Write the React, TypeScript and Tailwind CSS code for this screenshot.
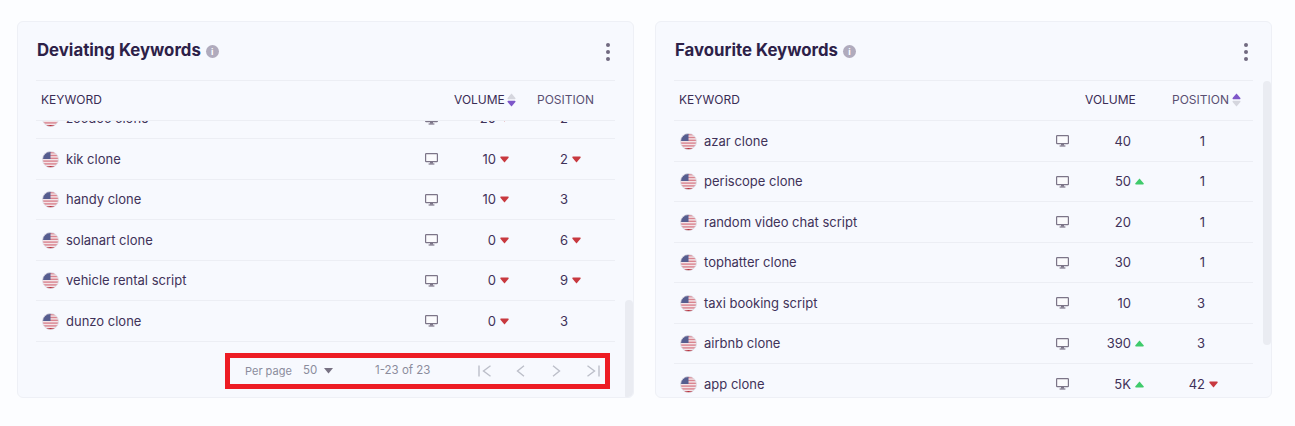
import React from 'react';

type Trend = 'up' | 'down' | null;

interface KeywordRow {
  name: string;
  volume: string;
  volumeTrend: Trend;
  position: string;
  positionTrend: Trend;
}

const deviating: KeywordRow[] = [
  { name: 'zocdoc clone', volume: '20', volumeTrend: 'down', position: '2', positionTrend: null },
  { name: 'kik clone', volume: '10', volumeTrend: 'down', position: '2', positionTrend: 'down' },
  { name: 'handy clone', volume: '10', volumeTrend: 'down', position: '3', positionTrend: null },
  { name: 'solanart clone', volume: '0', volumeTrend: 'down', position: '6', positionTrend: 'down' },
  { name: 'vehicle rental script', volume: '0', volumeTrend: 'down', position: '9', positionTrend: 'down' },
  { name: 'dunzo clone', volume: '0', volumeTrend: 'down', position: '3', positionTrend: null },
];

const favourite: KeywordRow[] = [
  { name: 'azar clone', volume: '40', volumeTrend: null, position: '1', positionTrend: null },
  { name: 'periscope clone', volume: '50', volumeTrend: 'up', position: '1', positionTrend: null },
  { name: 'random video chat script', volume: '20', volumeTrend: null, position: '1', positionTrend: null },
  { name: 'tophatter clone', volume: '30', volumeTrend: null, position: '1', positionTrend: null },
  { name: 'taxi booking script', volume: '10', volumeTrend: null, position: '3', positionTrend: null },
  { name: 'airbnb clone', volume: '390', volumeTrend: 'up', position: '3', positionTrend: null },
  { name: 'app clone', volume: '5K', volumeTrend: 'up', position: '42', positionTrend: 'down' },
];

function FlagIcon() {
  return (
    <svg width="17" height="17" viewBox="0 0 17 17" className="shrink-0">
      <defs>
        <clipPath id="flag-circle">
          <circle cx="8.5" cy="8.5" r="8" />
        </clipPath>
      </defs>
      <g clipPath="url(#flag-circle)">
        <rect width="17" height="17" fill="#f3e4e8" />
        <rect y="1" width="17" height="1.4" fill="#d9848f" />
        <rect y="3.8" width="17" height="1.4" fill="#d9848f" />
        <rect y="6.6" width="17" height="1.4" fill="#d9848f" />
        <rect y="9.4" width="17" height="1.4" fill="#d9848f" />
        <rect y="12.2" width="17" height="1.4" fill="#d9848f" />
        <rect y="15" width="17" height="2" fill="#b9333f" />
        <rect width="8.5" height="8" fill="#565d8f" />
      </g>
      <circle cx="8.5" cy="8.5" r="8" fill="none" stroke="#dcdde6" strokeWidth="0.8" />
    </svg>
  );
}

function DeviceIcon() {
  return (
    <svg width="13" height="12" viewBox="0 0 13 12" className="shrink-0">
      <rect x="0.6" y="0.6" width="11.8" height="8" rx="0.6" fill="#fbfbfd" stroke="#7c7588" strokeWidth="1.2" />
      <rect x="5" y="9" width="3" height="1.6" fill="#7c7588" />
      <rect x="3.6" y="10.4" width="5.8" height="1.2" fill="#7c7588" />
    </svg>
  );
}

function TrendIcon({ trend }: { trend: Trend }) {
  if (!trend) return null;
  if (trend === 'up') {
    return (
      <svg width="9" height="7" viewBox="0 0 9 7" className="shrink-0">
        <path d="M4.5 0.4 L8.6 5.2 Q9 6.4 8 6.4 L1 6.4 Q0 6.4 0.4 5.2 Z" fill="#3fcb6b" />
      </svg>
    );
  }
  return (
    <svg width="9" height="7" viewBox="0 0 9 7" className="shrink-0">
      <path d="M1 0.6 L8 0.6 Q9 0.6 8.6 1.8 L4.5 6.6 L0.4 1.8 Q0 0.6 1 0.6 Z" fill="#c8393f" />
    </svg>
  );
}

function SortIcon({ active }: { active: 'up' | 'down' }) {
  return (
    <svg width="9" height="14" viewBox="0 0 9 14" className="shrink-0">
      <path d="M4.5 0.5 L8.4 5 Q8.8 6.2 7.8 6.2 L1.2 6.2 Q0.2 6.2 0.6 5 Z" fill={active === 'up' ? '#7e57c9' : '#d5d6de'} />
      <path d="M1.2 7.8 L7.8 7.8 Q8.8 7.8 8.4 9 L4.5 13.5 L0.6 9 Q0.2 7.8 1.2 7.8 Z" fill={active === 'down' ? '#7e57c9' : '#d5d6de'} />
    </svg>
  );
}

function Pagination() {
  return (
    <div className="flex justify-end mt-[11px] mr-[5px]">
      <div className="flex items-center w-[385px] h-9 border-[5px] border-[#ed1c24] text-[11.5px] text-[#8b8c9c]">
        <span className="ml-[15px] w-[47px] whitespace-nowrap text-[11px]">Per page</span>
        <span className="ml-[11px] w-[21px]">50</span>
        <svg width="9" height="6" viewBox="0 0 9 6" className="shrink-0">
          <path d="M0 0 H9 L4.5 5.5 Z" fill="#787283" />
        </svg>
        <span className="ml-[42px] w-[55px] whitespace-nowrap">1-23 of 23</span>
        <svg width="14" height="12" viewBox="0 0 14 12" className="ml-[48px] shrink-0" fill="none" stroke="#bcbfc9" strokeWidth="1.4">
          <path d="M1 0.5 V11.5 M12.5 0.8 L5.5 6 L12.5 11.2" />
        </svg>
        <svg width="9" height="12" viewBox="0 0 9 12" className="ml-[24px] shrink-0" fill="none" stroke="#bcbfc9" strokeWidth="1.4">
          <path d="M8 0.8 L1.5 6 L8 11.2" />
        </svg>
        <svg width="9" height="12" viewBox="0 0 9 12" className="ml-[27px] shrink-0" fill="none" stroke="#bcbfc9" strokeWidth="1.4">
          <path d="M1 0.8 L7.5 6 L1 11.2" />
        </svg>
        <svg width="14" height="12" viewBox="0 0 14 12" className="ml-[25px] shrink-0" fill="none" stroke="#bcbfc9" strokeWidth="1.4">
          <path d="M13 0.5 V11.5 M1.5 0.8 L8.5 6 L1.5 11.2" />
        </svg>
      </div>
    </div>
  );
}

interface CardProps {
  title: string;
  rows: KeywordRow[];
  sorted: 'volume' | 'position';
  headKeywordClass: string;
  headVolumeClass: string;
  volumeClass: string;
  positionClass: string;
  tailClass: string;
  bodyClass: string;
  thumbClass: string;
  footer?: boolean;
}

function KeywordCard({ title, rows, sorted, headKeywordClass, headVolumeClass, volumeClass, positionClass, tailClass, bodyClass, thumbClass, footer }: CardProps) {
  return (
    <div className="relative w-[617px] h-[377px] overflow-hidden rounded-md border border-[#eef0f6] bg-[#f7f9fe] px-[18px]">
      <div className="flex items-center justify-between h-[58px]">
        <div className="flex items-center gap-[5px] pl-[1px]">
          <h3 className="mb-[2px] text-[16.8px] font-bold leading-none text-[#2d2148]">{title}</h3>
          <span className="flex items-center justify-center w-[13px] h-[13px] mt-[2px] rounded-full bg-[#b0abbd] text-[9px] font-bold leading-none text-white">i</span>
        </div>
        <div className="flex flex-col gap-[3px] mt-[2px] mr-[5px]">
          <span className="w-1 h-1 rounded-full bg-[#716a80]" />
          <span className="w-1 h-1 rounded-full bg-[#716a80]" />
          <span className="w-1 h-1 rounded-full bg-[#716a80]" />
        </div>
      </div>

      <div className="flex items-center h-[41px] pb-[2px] border-y border-[#eceef4] text-[12px] text-[#3a2c55]">
        <span className={headKeywordClass + ' pl-[5px]'}>KEYWORD</span>
        <span className={headVolumeClass + ' flex items-center gap-[2px] whitespace-nowrap'}>
          VOLUME
          {sorted === 'volume' && <SortIcon active="down" />}
        </span>
        <span className="flex items-center gap-[3px] whitespace-nowrap text-[#5a4f72]">
          POSITION
          {sorted === 'position' && <SortIcon active="up" />}
        </span>
      </div>

      <div className={bodyClass}>
        <div className={footer ? 'mt-[-22.5px]' : ''}>
          {rows.map((row) => (
            <div key={row.name} className="flex items-center h-[40.5px] pt-[1px] pr-[35px] border-b border-[#eceef4] text-[13px] text-[#3f3259]">
              <div className="flex flex-1 items-center gap-[7px] pl-[6px]">
                <FlagIcon />
                <span>{row.name}</span>
              </div>
              <div className="w-[14px] flex justify-center">
                <DeviceIcon />
              </div>
              <div className={volumeClass + ' flex items-center justify-end'}>
                <span>{row.volume}</span>
              </div>
              <div className="w-[13px] pl-[4px]">
                <TrendIcon trend={row.volumeTrend} />
              </div>
              <div className={positionClass + ' flex items-center justify-end'}>
                <span>{row.position}</span>
              </div>
              <div className={tailClass + ' pl-[4px]'}>
                <TrendIcon trend={row.positionTrend} />
              </div>
            </div>
          ))}
        </div>
      </div>

      {footer && <Pagination />}

      <div className={thumbClass} />
    </div>
  );
}

export default function App() {
  return (
    <div className="w-[1295px] h-[426px] overflow-hidden bg-[#fcfdff] font-['Inter','Liberation_Sans',sans-serif]">
      <div className="flex gap-[21px] pt-[21px] pl-[17px]">
        <KeywordCard
          title="Deviating Keywords"
          rows={deviating}
          sorted="volume"
          headKeywordClass="w-[418px]"
          headVolumeClass="w-[83px]"
          volumeClass="w-[58px]"
          positionClass="w-[59px]"
          tailClass="w-[12px]"
          bodyClass="h-[221px] overflow-hidden"
          thumbClass="absolute right-0 top-[278px] w-[8px] h-[99px] rounded bg-[#eaecf2]"
          footer
        />
        <KeywordCard
          title="Favourite Keywords"
          rows={favourite}
          sorted="position"
          headKeywordClass="w-[411px]"
          headVolumeClass="w-[87px]"
          volumeClass="w-[62px]"
          positionClass="w-[61px]"
          tailClass="w-[13px]"
          bodyClass="h-[280px] overflow-hidden"
          thumbClass="absolute right-0 top-[59px] w-[8px] h-[264px] rounded bg-[#eaecf2]"
        />
      </div>
    </div>
  );
}
